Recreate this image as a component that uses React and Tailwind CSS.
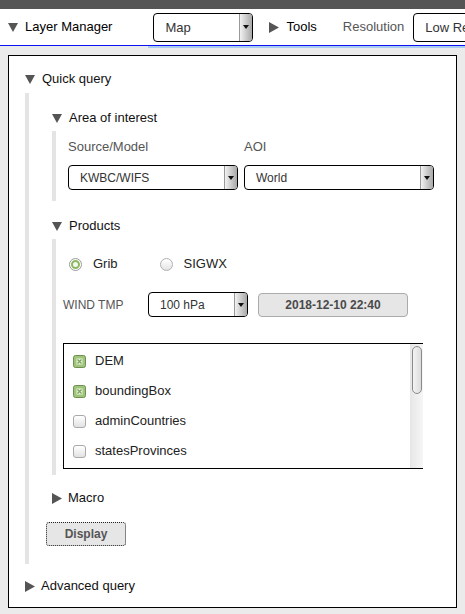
import React from 'react';

const font = { fontFamily: '"Liberation Sans", Arial, sans-serif' };

function TriDown({ className = '' }) {
  return (
    <svg width="10" height="9" viewBox="0 0 10 9" className={`flex-shrink-0 ${className}`}>
      <polygon points="0,0 10,0 5,9" fill="#555" />
    </svg>
  );
}

function TriRight({ className = '' }) {
  return (
    <svg width="10" height="11" viewBox="0 0 10 11" className={`flex-shrink-0 ${className}`}>
      <polygon points="0,0 10,5.5 0,11" fill="#555" />
    </svg>
  );
}

function Select({ label, className = '', textClass = 'text-[12px] pl-[11px]' }) {
  return (
    <div className={`flex flex-shrink-0 items-stretch bg-white border border-black rounded-[4px] overflow-hidden ${className}`}>
      <div className={`flex-1 flex items-center text-[#333] whitespace-nowrap overflow-hidden ${textClass}`}>{label}</div>
      <div className="w-[13px] flex-shrink-0 flex items-center justify-center bg-gradient-to-r from-[#f2f2f2] to-[#a8a8a8] border-l border-[#999]">
        <svg width="6" height="4" viewBox="0 0 6 4">
          <polygon points="0,0 6,0 3,4" fill="#111" />
        </svg>
      </div>
    </div>
  );
}

function Check({ checked, label }) {
  return (
    <div className="h-[30px] flex items-center gap-[9px]">
      {checked ? (
        <svg width="13" height="13" viewBox="0 0 13 13">
          <rect x="0.5" y="0.5" width="12" height="12" rx="2" fill="#9fc57a" stroke="#6f8f52" />
          <rect x="3.5" y="3.5" width="6" height="6" fill="#e8f2dc" />
          <path d="M4.5 4.5 L8.5 8.5 M8.5 4.5 L4.5 8.5" stroke="#7da35a" strokeWidth="1.3" />
        </svg>
      ) : (
        <div className="w-[13px] h-[13px] rounded-[3px] border border-[#a9a9a9] bg-gradient-to-b from-white to-[#e2e2e2]" />
      )}
      <span className="text-[13px] text-[#222]">{label}</span>
    </div>
  );
}

export default function App() {
  return (
    <div className="w-[465px] h-[614px] overflow-hidden bg-[#ebebeb] flex flex-col" style={font}>
      <div className="h-[9px] bg-[#555] flex-shrink-0" />
      <div className="h-[37px] bg-white border-b border-[#1010f0] flex items-center flex-shrink-0 whitespace-nowrap overflow-hidden">
        <TriDown className="ml-[8px]" />
        <span className="ml-[7px] text-[13px] text-black flex-shrink-0">Layer Manager</span>
        <Select label="Map" className="ml-[41px] w-[100px] h-[29px]" textClass="text-[13px] pl-[11px] pt-[2px]" />
        <TriRight className="ml-[16px]" />
        <span className="ml-[7px] text-[13px] text-black flex-shrink-0">Tools</span>
        <span className="ml-[26px] text-[13px] text-[#555] flex-shrink-0">Resolution</span>
        <Select label="Low Resolution" className="ml-[9px] w-[120px] h-[29px]" textClass="text-[13px] pl-[11px] pt-[2px]" />
      </div>
      <div className="flex h-[2px] flex-shrink-0">
        <div className="w-[148px] bg-[#ebebeb]" />
        <div className="flex-1 bg-[#a9cdf2]" />
      </div>

      <div className="px-[8px] pt-[7px] flex-1">
        <div className="bg-white border border-black h-[553px] pt-[13px] pl-[16px]">
          {/* Quick query */}
          <div className="h-[20px] flex items-center">
            <TriDown />
            <span className="ml-[7px] text-[13px] text-[#111]">Quick query</span>
          </div>
          <div className="mt-[4px] border-l-[4px] border-[#e4e4e4] h-[471px] pt-[15px] pl-[23px]">
            {/* Area of interest */}
            <div className="h-[20px] flex items-center">
              <TriDown />
              <span className="ml-[7px] text-[13px] text-[#111]">Area of interest</span>
            </div>
            <div className="mt-[3px] border-l-[4px] border-[#e4e4e4] h-[70px] pl-[12px] pt-[8px]">
              <div className="flex h-[16px] items-center text-[13px] text-[#555]">
                <span className="w-[176px]">Source/Model</span>
                <span>AOI</span>
              </div>
              <div className="flex mt-[10px] gap-[6px]">
                <Select label="KWBC/WIFS" className="w-[170px] h-[25px]" />
                <Select label="World" className="w-[190px] h-[25px]" />
              </div>
            </div>

            {/* Products */}
            <div className="mt-[15px] h-[20px] flex items-center">
              <TriDown />
              <span className="ml-[7px] text-[13px] text-[#111]">Products</span>
            </div>
            <div className="mt-[3px] border-l-[4px] border-[#e4e4e4] h-[236px] pl-[7px] pt-[17px]">
              <div className="flex items-center h-[16px] text-[13px] text-[#222]">
                <div className="ml-[6px] w-[13px] h-[13px] rounded-full border border-[#9a9a9a] bg-white flex items-center justify-center">
                  <div className="w-[9px] h-[9px] rounded-full border-[2px] border-[#8cb85e] bg-[#f4f8ef]" />
                </div>
                <span className="ml-[11px]">Grib</span>
                <div className="ml-[42px] w-[13px] h-[13px] rounded-full border border-[#b0b0b0] bg-gradient-to-b from-white to-[#e4e4e4]" />
                <span className="ml-[11px]">SIGWX</span>
              </div>
              <div className="flex items-start mt-[20px]">
                <span className="w-[85px] pt-[4px] text-[12px] text-[#555]">WIND TMP</span>
                <Select label="100 hPa" className="w-[100px] h-[25px]" textClass="text-[12px] pl-[11px]" />
                <div className="ml-[10px] mt-[1px] w-[150px] h-[24px] rounded-[4px] border border-[#ababab] bg-[#e6e6e6] flex items-center justify-center text-[12px] font-bold text-[#4a4a4a]">
                  2018-12-10 22:40
                </div>
              </div>
              <div className="mt-[26px] w-[360px] h-[126px] border-y border-l border-black flex">
                <div className="flex-1 pl-[9px] pt-[2px]">
                  <Check checked label="DEM" />
                  <Check checked label="boundingBox" />
                  <Check label="adminCountries" />
                  <Check label="statesProvinces" />
                </div>
                <div className="w-[13px] bg-gradient-to-r from-[#e6e6e6] to-[#f6f6f6] pt-[2px] flex justify-center">
                  <div className="w-[10px] h-[48px] rounded-[5px] border border-[#8a8a8a] bg-gradient-to-r from-[#f4f4f4] to-[#dcdcdc]" />
                </div>
              </div>
            </div>

            {/* Macro */}
            <div className="mt-[13px] h-[20px] flex items-center">
              <TriRight />
              <span className="ml-[6px] text-[13px] text-[#111]">Macro</span>
            </div>
            <div className="-ml-[6px] mt-[14px] w-[80px] h-[24px] rounded-[3px] border border-dotted border-[#222] bg-[#e6e6e6] flex items-center justify-center text-[12px] font-bold text-[#555]">
              Display
            </div>
          </div>

          {/* Advanced query */}
          <div className="mt-[12px] h-[20px] flex items-center">
            <TriRight />
            <span className="ml-[6px] text-[13px] text-[#111]">Advanced query</span>
          </div>
        </div>
      </div>
    </div>
  );
}
